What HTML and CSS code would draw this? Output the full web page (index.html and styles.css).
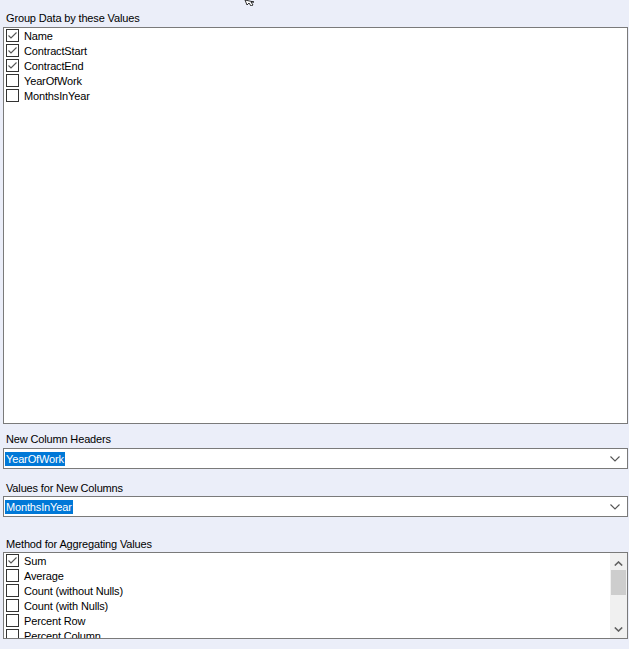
FILE: index.html
```html
<!DOCTYPE html>
<html>
<head>
<meta charset="utf-8">
<link rel="stylesheet" href="styles.css">
</head>
<body>
<div class="panel">
  <svg class="cursor" width="14" height="6" viewBox="0 0 14 6"><path d="M1 0 L3 5 L5 3 L7 6 L9 5 L7 2 L10 2 Z" fill="#fff" stroke="#000" stroke-width="0.8"/></svg>
  <div class="label first">Group Data by these Values</div>
  <div class="list big">
    <div class="item"><span class="cb on"><svg viewBox="0 0 13 13"><polyline points="2.5,6.5 5,9 10.5,3.5"/></svg></span><span class="t">Name</span></div>
    <div class="item"><span class="cb on"><svg viewBox="0 0 13 13"><polyline points="2.5,6.5 5,9 10.5,3.5"/></svg></span><span class="t">ContractStart</span></div>
    <div class="item"><span class="cb on"><svg viewBox="0 0 13 13"><polyline points="2.5,6.5 5,9 10.5,3.5"/></svg></span><span class="t">ContractEnd</span></div>
    <div class="item"><span class="cb"></span><span class="t">YearOfWork</span></div>
    <div class="item"><span class="cb"></span><span class="t">MonthsInYear</span></div>
  </div>

  <div class="label l2">New Column Headers</div>
  <div class="combo">
    <span class="sel">YearOfWork</span>
    <svg class="chev" viewBox="0 0 10 6" width="10" height="6"><polyline points="0.5,0.5 5,5 9.5,0.5"/></svg>
  </div>

  <div class="label l3">Values for New Columns</div>
  <div class="combo">
    <span class="sel">MonthsInYear</span>
    <svg class="chev" viewBox="0 0 10 6" width="10" height="6"><polyline points="0.5,0.5 5,5 9.5,0.5"/></svg>
  </div>

  <div class="label l4">Method for Aggregating Values</div>
  <div class="list small">
    <div class="rows">
      <div class="item"><span class="cb on"><svg viewBox="0 0 13 13"><polyline points="2.5,6.5 5,9 10.5,3.5"/></svg></span><span class="t">Sum</span></div>
      <div class="item"><span class="cb"></span><span class="t">Average</span></div>
      <div class="item"><span class="cb"></span><span class="t">Count (without Nulls)</span></div>
      <div class="item"><span class="cb"></span><span class="t">Count (with Nulls)</span></div>
      <div class="item"><span class="cb"></span><span class="t">Percent Row</span></div>
      <div class="item"><span class="cb"></span><span class="t">Percent Column</span></div>
    </div>
    <div class="scrollbar">
      <svg class="arrow" viewBox="0 0 9 5" width="9" height="5"><polyline points="0.8,4.5 4.5,1 8.2,4.5"/></svg>
      <div class="thumb"></div>
      <div class="track"></div>
      <svg class="arrow" viewBox="0 0 9 5" width="9" height="5"><polyline points="0.8,0.5 4.5,4 8.2,0.5"/></svg>
    </div>
  </div>
</div>
</body>
</html>
```
FILE: styles.css
```css
* { box-sizing: border-box; }
html, body { margin: 0; padding: 0; }
body {
  background: #ebeef9;
  font-family: "Liberation Sans", Arial, sans-serif;
  font-size: 11px;
  letter-spacing: -0.15px;
  color: #000;
  width: 629px;
  height: 649px;
  overflow: hidden;
}
.panel {
  position: relative;
  padding: 0 1px 0 3px;
  display: flex;
  flex-direction: column;
}
.cursor {
  position: absolute;
  left: 244px;
  top: 0;
}
.label {
  height: 15px;
  line-height: 13px;
  padding: 2px 0 0 3px;
  white-space: nowrap;
}
.label.first { margin-top: 10px; margin-bottom: 2px; }
.label.l2 { margin-top: 7px; margin-bottom: 2px; }
.label.l3 { margin-top: 11px; margin-bottom: 1px; }
.label.l4 { margin-top: 19px; margin-bottom: 1px; }

.list {
  background: #fff;
  border: 1px solid #7a7a7a;
  overflow: hidden;
}
.list.big { height: 397px; }
.list.small {
  height: 87px;
  display: flex;
}
.rows { flex: 1; overflow: hidden; }
.item {
  height: 15px;
  display: flex;
  align-items: flex-start;
  padding: 1px 0 0 2px;
  white-space: nowrap;
}
.item .t {
  line-height: 13px;
  padding-top: 1px;
}
.cb {
  width: 13px;
  height: 13px;
  border: 1px solid #333;
  background: #fff;
  margin-right: 5px;
  flex: none;
  display: block;
  position: relative;
}
.cb svg {
  position: absolute;
  left: -1px;
  top: -1px;
  width: 13px;
  height: 13px;
  fill: none;
  stroke: #555;
  stroke-width: 1.1;
}

.combo {
  height: 21px;
  background: #fff;
  border: 1px solid #7a7a7a;
  display: flex;
  align-items: center;
  padding: 0 7px 0 1px;
}
.sel {
  background: #0078d7;
  color: #fff;
  height: 14px;
  line-height: 15px;
  padding: 0 1px;
}
.chev {
  margin-left: auto;
  fill: none;
  stroke: #555;
  stroke-width: 1.1;
}

.scrollbar {
  width: 17px;
  background: #f0f0f0;
  display: flex;
  flex-direction: column;
  align-items: center;
  flex: none;
}
.arrow {
  fill: none;
  stroke: #606060;
  stroke-width: 1.6;
  margin-top: 8px;
  margin-bottom: 4px;
}
.scrollbar .arrow:last-child { margin-top: 0; margin-bottom: 6px; }
.thumb {
  width: 15px;
  height: 25px;
  background: #cdcdcd;
}
.track { flex: 1; }
```
